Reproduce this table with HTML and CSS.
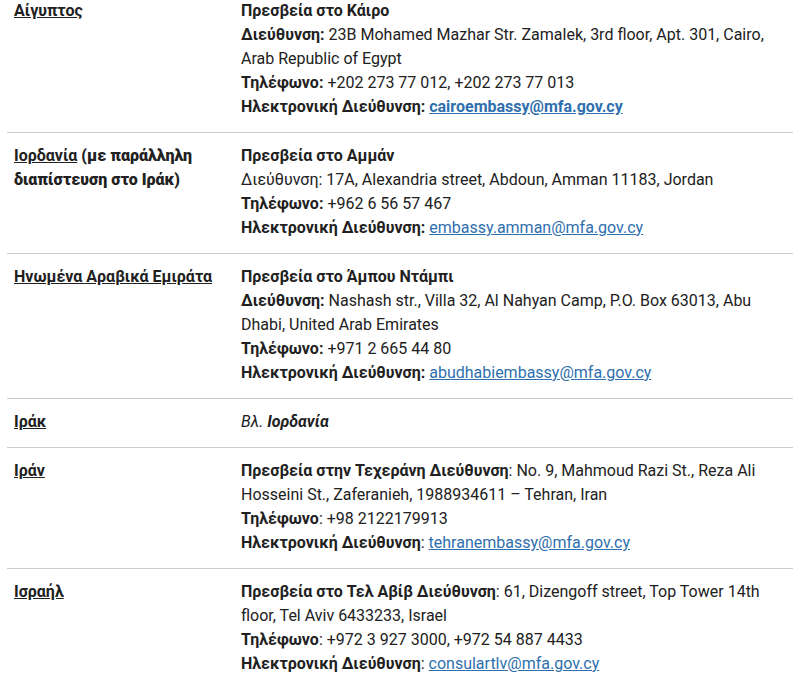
FILE: index.html
```html
<!DOCTYPE html>
<html lang="el">
<head>
<meta charset="utf-8">
<title>Πρεσβείες</title>
<link rel="stylesheet" href="styles.css">
</head>
<body>
<table class="embassies">
  <tr>
    <td class="country"><a href="#" class="clink">Αίγυπτος</a></td>
    <td class="info">
      <b>Πρεσβεία στο Κάιρο</b><br>
      <b>Διεύθυνση:</b> 23B Mohamed Mazhar Str. Zamalek, 3rd floor, Apt. 301, Cairo, Arab Republic of Egypt<br>
      <b>Τηλέφωνο:</b> +202 273 77 012, +202 273 77 013<br>
      <b>Ηλεκτρονική Διεύθυνση:</b> <a href="#" class="mail mail-bold">cairoembassy@mfa.gov.cy</a>
    </td>
  </tr>
  <tr>
    <td class="country"><a href="#" class="clink">Ιορδανία</a> <b>(με παράλληλη διαπίστευση στο Ιράκ)</b></td>
    <td class="info">
      <b>Πρεσβεία στο Αμμάν</b><br>
      Διεύθυνση: 17A, Alexandria street, Abdoun, Amman 11183, Jordan<br>
      <b>Τηλέφωνο:</b> +962 6 56 57 467<br>
      <b>Ηλεκτρονική Διεύθυνση:</b> <a href="#" class="mail">embassy.amman@mfa.gov.cy</a>
    </td>
  </tr>
  <tr>
    <td class="country"><a href="#" class="clink">Ηνωμένα Αραβικά Εμιράτα</a></td>
    <td class="info">
      <b>Πρεσβεία στο Άμπου Ντάμπι</b><br>
      <b>Διεύθυνση:</b> Nashash str., Villa 32, Al Nahyan Camp, P.O. Box 63013, Abu Dhabi, United Arab Emirates<br>
      <b>Τηλέφωνο:</b> +971 2 665 44 80<br>
      <b>Ηλεκτρονική Διεύθυνση:</b> <a href="#" class="mail">abudhabiembassy@mfa.gov.cy</a>
    </td>
  </tr>
  <tr>
    <td class="country"><a href="#" class="clink">Ιράκ</a></td>
    <td class="info"><i>Βλ. <b>Ιορδανία</b></i></td>
  </tr>
  <tr>
    <td class="country"><a href="#" class="clink">Ιράν</a></td>
    <td class="info">
      <b>Πρεσβεία στην Τεχεράνη Διεύθυνση</b>: No. 9, Mahmoud Razi St., Reza Ali Hosseini St., Zaferanieh, 1988934611 – Tehran, Iran<br>
      <b>Τηλέφωνο</b>: +98 2122179913<br>
      <b>Ηλεκτρονική Διεύθυνση</b>: <a href="#" class="mail">tehranembassy@mfa.gov.cy</a>
    </td>
  </tr>
  <tr>
    <td class="country"><a href="#" class="clink">Ισραήλ</a></td>
    <td class="info">
      <b>Πρεσβεία στο Τελ Αβίβ Διεύθυνση</b>: 61, Dizengoff street, Top Tower 14th floor, Tel Aviv 6433233, Israel<br>
      <b>Τηλέφωνο</b>: +972 3 927 3000, +972 54 887 4433<br>
      <b>Ηλεκτρονική Διεύθυνση</b>: <a href="#" class="mail">consulartlv@mfa.gov.cy</a>
    </td>
  </tr>
</table>
</body>
</html>
```

FILE: styles.css
```css
html, body {
  margin: 0;
  padding: 0;
  background: #ffffff;
}
body {
  font-family: Roboto, "Noto Sans", sans-serif;
  font-size: 16px;
  line-height: 24px;
  color: #212121;
  overflow: hidden;
}
.embassies {
  border-collapse: collapse;
  margin: -12px 0 0 7px;
  width: calc(100% - 7px);
}
.embassies tr {
  border-bottom: 1px solid #cccccc;
}
.embassies td {
  vertical-align: top;
  padding: 11px 7px 13px 7px;
}
.country {
  width: 213px;
  font-weight: 700;
}
.clink {
  color: #212121;
  text-decoration: underline;
  font-weight: 700;
}
.info b {
  font-weight: 700;
}
.mail {
  color: #2f6fae;
  text-decoration: underline;
}
.mail-bold {
  font-weight: 700;
}
```
